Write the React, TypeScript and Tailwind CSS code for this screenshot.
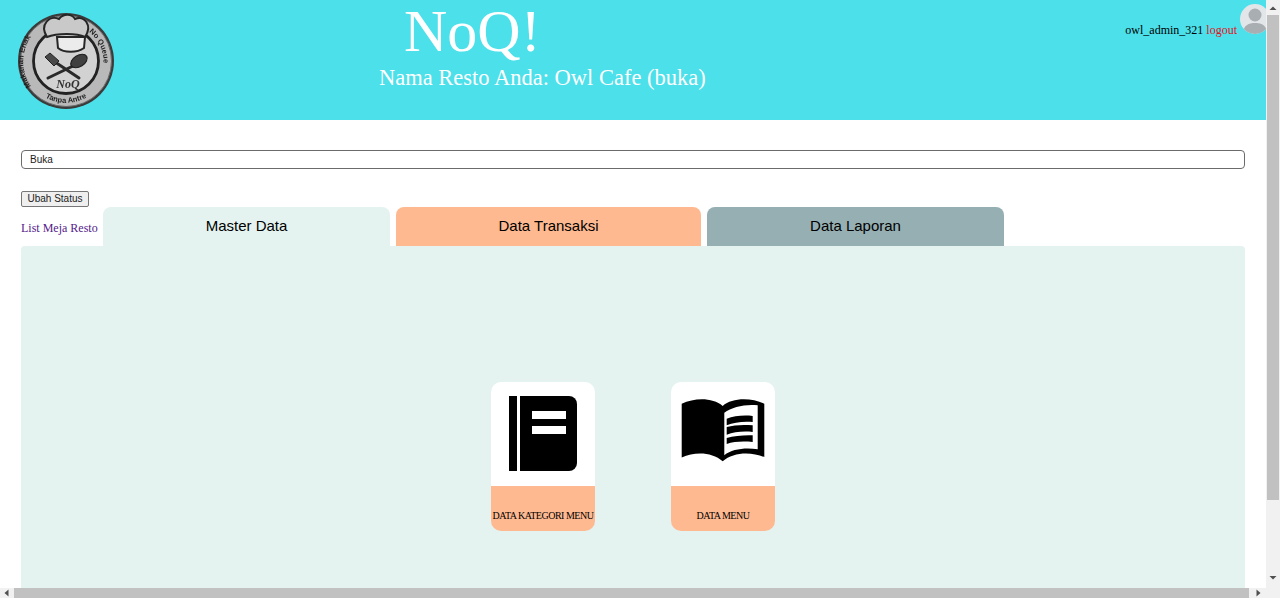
const serif = "font-['Liberation_Serif',serif]";

function Logo() {
  return (
    <svg width="100" height="100" viewBox="0 0 100 100" className="shrink-0">
      <defs>
        <path id="ringL" d="M 14 74 A 43 43 0 0 1 30 11" />
        <path id="ringB" d="M 17 76 A 42 42 0 0 0 81 76" />
        <path id="ringR" d="M 72 20 A 38 38 0 0 1 83 66" />
        <filter id="soft"><feGaussianBlur stdDeviation="0.35" /></filter>
      </defs>
      <g filter="url(#soft)">
        <circle cx="49" cy="49" r="48" fill="#3a3a3a" />
        <circle cx="49" cy="49" r="45.5" fill="#b9b9b9" stroke="#6a6a6a" strokeWidth="1" />
        <circle cx="49" cy="49" r="32.5" fill="#d2d2d2" stroke="#222" strokeWidth="2.8" />
        <path d="M30 25 C 22 12 33 3 42 7 C 47 1 55 2 58 7 C 67 3 76 13 68 25 C 60 21 40 21 30 25 Z" fill="#c9c9c9" stroke="#262626" strokeWidth="2" />
        <path d="M40 25 H 68 L 67 36 C 60 41 47 41 41 36 Z" fill="#ececec" stroke="#262626" strokeWidth="2" />
        <path d="M38 50 L 62 66" stroke="#2a2a2a" strokeWidth="3" strokeLinecap="round" />
        <path d="M28 45 L 33 41 L 42 49 L 37 54 Z" fill="#4a4a4a" stroke="#222" strokeWidth="1" />
        <path d="M56 54 L 31 66" stroke="#2a2a2a" strokeWidth="3" strokeLinecap="round" />
        <ellipse cx="62" cy="49" rx="9" ry="5.6" transform="rotate(-32 62 49)" fill="#3f3f3f" stroke="#1f1f1f" strokeWidth="1.2" />
        <text x="51" y="76" textAnchor="middle" fontSize="12" fontStyle="italic" fontWeight="700" fontFamily="Liberation Serif, serif" fill="#333">NoQ</text>
        <g fontSize="7.5" fontWeight="700" fontFamily="Liberation Sans, sans-serif" fill="#1f1f1f">
          <text><textPath href="#ringL">Makanan Enak</textPath></text>
          <text textAnchor="middle"><textPath href="#ringB" startOffset="50%">Tanpa Antre</textPath></text>
          <text><textPath href="#ringR">No Queue</textPath></text>
        </g>
      </g>
    </svg>
  );
}

function NotebookIcon() {
  return (
    <svg width="68" height="75" viewBox="0 0 68 75">
      <rect x="0" y="0" width="8" height="75" fill="#000" />
      <path d="M11 0 H60 A8 8 0 0 1 68 8 V67 A8 8 0 0 1 60 75 H11 Z" fill="#000" />
      <rect x="23" y="15" width="34" height="8" fill="#fff" />
      <rect x="23" y="30" width="34" height="8" fill="#fff" />
    </svg>
  );
}

function OpenBookIcon() {
  return (
    <svg width="84" height="64" viewBox="0 0 84 64">
      <path d="M0.7 5.7 C 14 -0.5 32 -0.5 41.7 8 C 51 -0.5 70 -0.5 83.3 5.7 V 59 C 70 53.5 52 54 41.7 63.3 C 31 54 14 53.5 0.7 59.6 Z" fill="#000" />
      <path d="M43.3 14.7 C 51 9 64 6 76.7 7.3 V 51.3 C 64 49.5 51 51 43.3 57.3 Z" fill="#fff" />
      <path d="M45.7 20.7 C 53 18 62 17 71.7 18 V 24 C 62 23 53 24.5 45.7 27.3 Z" fill="#000" />
      <path d="M45.7 29 C 53 27 62 26.5 71.7 27.3 V 34 C 62 33 53 34 45.7 36.7 Z" fill="#000" />
      <path d="M45.7 40 C 53 38 62 37 71.7 37.3 V 44 C 62 43 53 43.5 45.7 46 Z" fill="#000" />
    </svg>
  );
}

function MenuCard({ label, icon, iconClass }: { label: string; icon: React.ReactNode; iconClass: string }) {
  return (
    <div className="w-[104px] h-[149px] rounded-[10px] overflow-hidden flex flex-col">
      <div className={`h-[104px] bg-white flex items-center justify-center ${iconClass}`}>{icon}</div>
      <div className={`h-[45px] bg-[#ffb990] flex items-center justify-center pt-[14px] text-[10px] leading-none tracking-[-0.5px] whitespace-nowrap text-black ${serif}`}>
        {label}
      </div>
    </div>
  );
}

function Arrow({ d }: { d: string }) {
  return (
    <svg width="8" height="8" viewBox="0 0 8 8"><path d={d} fill="#505050" /></svg>
  );
}

export default function App() {
  return (
    <div className="w-[1280px] h-[598px] overflow-hidden flex bg-white">
      <div className="w-[1266px] h-full flex flex-col">
        <div className="flex-1 min-h-0 overflow-hidden">
          <header className="h-[120px] bg-[#4be0ea] flex items-start relative">
            <div className="pl-[17px] pt-[12px]"><Logo /></div>
            <div className={`flex flex-col text-white ${serif}`}>
              <div className="ml-[287px] text-[60px] leading-[62px] whitespace-nowrap">NoQ!</div>
              <div className="ml-[262px] mt-[3px] text-[22.5px] leading-[26px] whitespace-nowrap">Nama Resto Anda: Owl Cafe (buka)</div>
            </div>
            <div className={`ml-auto flex items-start text-[12px] leading-[15px] whitespace-nowrap ${serif}`}>
              <div className="mt-[23px] mr-[3px] text-black">
                owl_admin_321 <span className="text-[#e0131b]">logout</span>
              </div>
              <div className="w-[30px] h-[30px] mt-[4px] -mr-[4px] rounded-full bg-[#e3e6e8] overflow-hidden relative shrink-0">
                <svg width="30" height="30" viewBox="0 0 30 30" className="absolute inset-0">
                  <circle cx="15" cy="11" r="6.5" fill="#a9aeb3" />
                  <path d="M3 30 C 3 21 9 19 15 19 C 21 19 27 21 27 30 Z" fill="#a9aeb3" />
                </svg>
              </div>
            </div>
          </header>

          <main className="px-[21px]">
            <div className="pt-[30px]">
              <div className="w-[1224px] h-[19px] border border-[#6b6b6b] rounded-[4px] pl-[8px] flex items-center font-['Liberation_Sans',sans-serif] text-[10px] text-[#222]">
                Buka
              </div>
            </div>
            <button className="block mt-[22px] w-[68px] h-[16px] bg-[#efefef] border border-[#767676] rounded-[2px] font-['Liberation_Sans',sans-serif] text-[10px] leading-none text-[#222] text-center">
              Ubah Status
            </button>
            <div className="flex items-end h-[39px]">
              <span className={`w-[82px] pb-[10px] text-[12px] leading-[15px] text-[#551a8b] whitespace-nowrap ${serif}`}>List Meja Resto</span>
              <div className="flex gap-[6px] font-['Liberation_Sans',sans-serif] text-[15px] text-black">
                <div className="w-[287px] h-[39px] rounded-t-[8px] bg-[#e4f3f0] flex items-center justify-center">Master Data</div>
                <div className="w-[305px] h-[39px] rounded-t-[8px] bg-[#ffb990] flex items-center justify-center">Data Transaksi</div>
                <div className="w-[297px] h-[39px] rounded-t-[8px] bg-[#95afb2] flex items-center justify-center">Data Laporan</div>
              </div>
            </div>
            <div className="w-[1224px] h-[400px] rounded-t-[4px] bg-[#e4f3f0] pt-[136px] flex justify-center gap-[76px]">
              <MenuCard label="DATA KATEGORI MENU" icon={<NotebookIcon />} iconClass="pb-[1px]" />
              <MenuCard label="DATA MENU" icon={<OpenBookIcon />} iconClass="pb-[8px]" />
            </div>
          </main>
        </div>
        <div className="h-[10px] shrink-0 flex bg-[#f1f1f1]">
          <div className="w-[14px] flex items-center justify-center"><Arrow d="M5.5 0.5 V7.5 L1.5 4 Z" /></div>
          <div className="flex-1 bg-[#c1c1c1]" />
          <div className="w-[17px] flex items-center justify-center"><Arrow d="M2.5 0.5 V7.5 L6.5 4 Z" /></div>
        </div>
      </div>
      <div className="w-[14px] h-full shrink-0 bg-[#f1f1f1] flex flex-col items-center">
        <div className="h-[15px] w-full flex items-center justify-center"><Arrow d="M4 2.5 L7.5 6 H0.5 Z" /></div>
        <div className="w-[12px] h-[485px] bg-[#c1c1c1]" />
        <div className="flex-1" />
        <div className="h-[38px] w-full flex items-start pt-[14px] justify-center"><Arrow d="M0.5 2 H7.5 L4 5.5 Z" /></div>
      </div>
    </div>
  );
}
